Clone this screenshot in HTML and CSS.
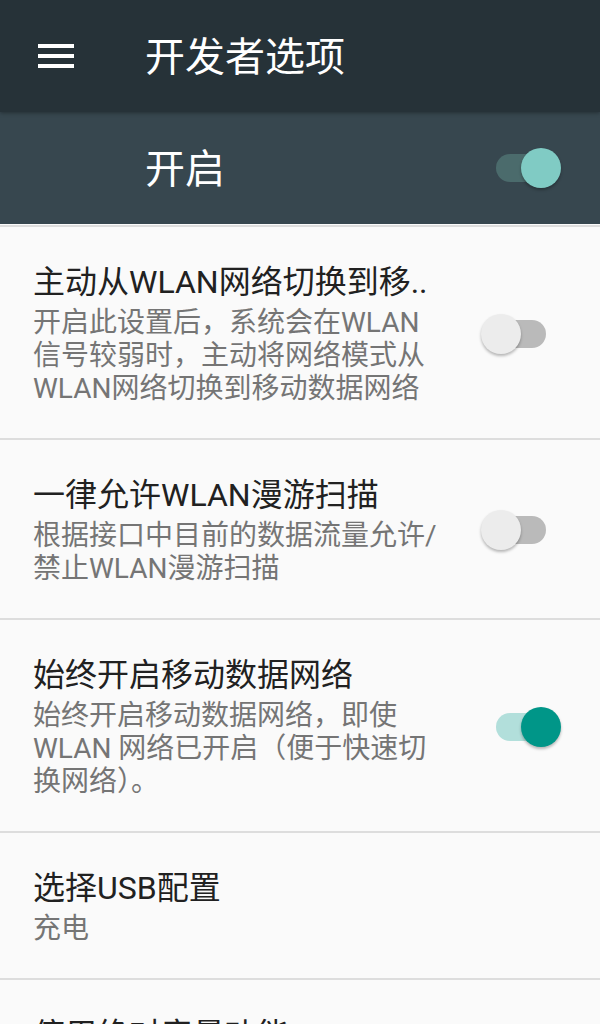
FILE: index.html
```html
<!DOCTYPE html>
<html lang="zh-CN">
<head>
<meta charset="utf-8">
<title>开发者选项</title>
<link rel="stylesheet" href="styles.css">
</head>
<body>
<header class="appbar">
  <div class="menu-btn" aria-label="菜单">
    <svg width="36" height="24" viewBox="0 0 36 24"><rect x="0" y="0" width="36" height="4" fill="#fff"/><rect x="0" y="10" width="36" height="4" fill="#fff"/><rect x="0" y="20" width="36" height="4" fill="#fff"/></svg>
  </div>
  <h1 class="appbar-title">开发者选项</h1>
</header>
<div class="switchbar">
  <span class="switchbar-label">开启</span>
  <div class="switch switch-bar-on"><span class="track"></span><span class="thumb"></span></div>
</div>
<main class="list">
  <div class="row">
    <div class="text">
      <div class="title">主动从WLAN网络切换到移..</div>
      <div class="summary">开启此设置后，系统会在WLAN信号较弱时，主动将网络模式从WLAN网络切换到移动数据网络</div>
    </div>
    <div class="switch switch-off"><span class="track"></span><span class="thumb"></span></div>
  </div>
  <div class="row">
    <div class="text">
      <div class="title">一律允许WLAN漫游扫描</div>
      <div class="summary">根据接口中目前的数据流量允许/禁止WLAN漫游扫描</div>
    </div>
    <div class="switch switch-off"><span class="track"></span><span class="thumb"></span></div>
  </div>
  <div class="row">
    <div class="text">
      <div class="title">始终开启移动数据网络</div>
      <div class="summary">始终开启移动数据网络，即使WLAN 网络已开启（便于快速切换网络）。</div>
    </div>
    <div class="switch switch-on"><span class="track"></span><span class="thumb"></span></div>
  </div>
  <div class="row">
    <div class="text">
      <div class="title">选择USB配置</div>
      <div class="summary">充电</div>
    </div>
  </div>
  <div class="row">
    <div class="text">
      <div class="title">停用绝对音量功能</div>
    </div>
  </div>
</main>
</body>
</html>
```
FILE: styles.css
```css
* { box-sizing: border-box; }
html, body { margin: 0; padding: 0; }
body {
  width: 600px;
  height: 1024px;
  overflow: hidden;
  background: #fafafa;
  font-family: Roboto, "Noto Sans CJK SC", sans-serif;
}
.appbar {
  height: 112px;
  background: #263238;
  display: flex;
  align-items: center;
  position: relative;
  z-index: 2;
  box-shadow: 0 1px 4px rgba(0,0,0,0.35);
}
.menu-btn {
  width: 36px;
  height: 24px;
  margin-left: 38px;
  display: flex;
}
.appbar-title {
  margin: 3px 0 0 71px;
  font-weight: normal;
  font-size: 40px;
  line-height: 48px;
  color: #ffffff;
}
.switchbar {
  height: 112px;
  background: #37474f;
  display: flex;
  align-items: center;
  padding: 0 39px 0 145px;
  position: relative;
  z-index: 1;
}
.switchbar-label {
  flex: 1;
  padding-top: 3px;
  font-size: 40px;
  line-height: 48px;
  color: #ffffff;
}
.list { padding-top: 1px; }
.row {
  display: flex;
  align-items: center;
  gap: 40px;
  padding: 35px 39px 33px 33px;
  border-top: 2px solid #dddddd;
}
.text { flex: 1; min-width: 0; }
.title {
  font-size: 32px;
  line-height: 40px;
  color: #212121;
  white-space: nowrap;
  overflow: hidden;
}
.summary {
  margin-top: 4px;
  font-size: 28px;
  line-height: 33px;
  color: #757575;
}
.switch {
  position: relative;
  width: 80px;
  height: 40px;
  flex: none;
}
.switch .track {
  position: absolute;
  left: 15px;
  top: 6px;
  width: 50px;
  height: 28px;
  border-radius: 14px;
}
.switch .thumb {
  position: absolute;
  top: 0;
  width: 40px;
  height: 40px;
  border-radius: 50%;
  box-shadow: 0 2px 3px rgba(0,0,0,0.28);
}
.switch-off .track { background: #bababa; }
.switch-off .thumb { left: 0; background: #ececec; }
.switch-on .track { background: #b2dfdb; }
.switch-on .thumb { left: 40px; background: #009688; }
.switch-bar-on .track { background: #4b6b6c; }
.switch-bar-on .thumb { left: 40px; background: #80cbc4; }
```
